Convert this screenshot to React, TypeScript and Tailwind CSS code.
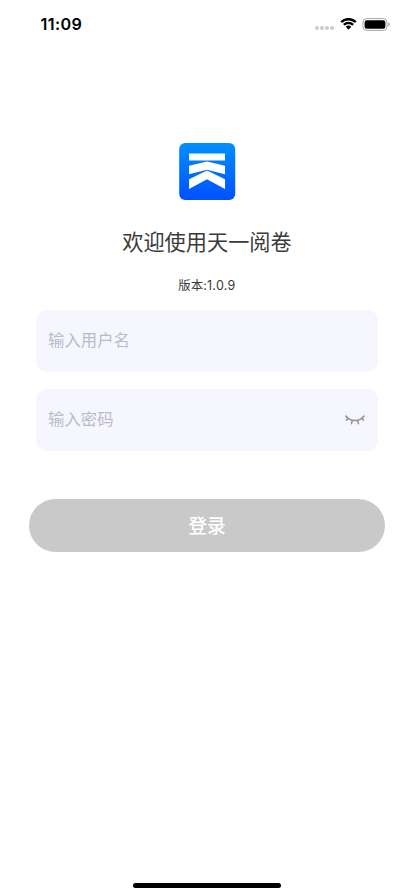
import React from "react";

const cjk = "font-['Noto_Sans_CJK_SC',sans-serif]";

function StatusBar() {
  return (
    <header className="flex h-12 items-center justify-between pl-[40.5px] pr-[24px]">
      <span className="font-['Inter',sans-serif] text-[16.2px] leading-5 font-semibold tracking-[0.35px] text-black">11:09</span>
      <div className="flex items-center">
        <div className="mt-[8px] mr-[6px] flex gap-[1.1px]">
          {[0, 1, 2, 3].map((i) => (
            <span key={i} className="size-[4px] rounded-full bg-[#cccccc]" />
          ))}
        </div>
        <svg width="17" height="12" viewBox="0 0 17 12" className="mr-[5px]">
          <path d="M8.5 2.4c2.4 0 4.6.9 6.2 2.4.1.1.3.1.4 0l1.3-1.2a.3.3 0 0 0 0-.5 11.4 11.4 0 0 0-15.8 0 .3.3 0 0 0 0 .5l1.3 1.2c.1.1.3.1.4 0a9 9 0 0 1 6.2-2.4Z" />
          <path d="M8.5 6.2c1.3 0 2.6.5 3.5 1.4.1.1.3.1.4 0l1.3-1.3a.3.3 0 0 0 0-.5 7.5 7.5 0 0 0-10.4 0 .3.3 0 0 0 0 .5l1.3 1.3c.1.1.3.1.4 0 1-.9 2.2-1.4 3.5-1.4Z" />
          <path d="m11 9.1-2.3 2.3a.3.3 0 0 1-.4 0L6 9.1a.3.3 0 0 1 0-.5 3.8 3.8 0 0 1 5 0c.2.1.2.4 0 .5Z" />
        </svg>
        <svg width="28" height="13" viewBox="0 0 28 13">
          <rect x="1" y="0.6" width="24" height="11.8" rx="3.6" fill="none" stroke="#a6a6a6" />
          <rect x="2.6" y="2.2" width="20.8" height="8.6" rx="2.2" />
          <path d="M26.4 4.5v4c.8-.3 1.3-1.1 1.3-2s-.5-1.7-1.3-2Z" fill="#999" />
        </svg>
      </div>
    </header>
  );
}

function Logo() {
  return (
    <svg width="57" height="57" viewBox="0 0 57 57" className="block">
      <defs>
        <linearGradient id="logo-blue" x1="0" y1="0" x2="0" y2="1">
          <stop offset="0" stopColor="#0090ff" />
          <stop offset="1" stopColor="#0050ff" />
        </linearGradient>
      </defs>
      <rect x="0.2" width="56" height="57" rx="6" fill="url(#logo-blue)" />
      <g fill="#fff">
        <path d="M10 10.4h36v7H10Z" />
        <path d="M10 22.8 28 18.6l18 4.2v8.5L28 26.7 10 31.3Z" />
        <path d="M10 36.2 28 27.6l18 8.6v9.9L28 36.3 10 46.1Z" />
      </g>
    </svg>
  );
}

function ClosedEye() {
  return (
    <svg width="20" height="10" viewBox="0 0 20 10" fill="none" stroke="#929296" strokeWidth="1.5" strokeLinecap="round">
      <path d="M0.9 1C5.3 7 14.7 7 19.1 1M3 3.2 1.5 5.2M7.2 5.5 6.5 8.7M12.7 5.5l.7 3.2M17 3.2l1.5 2" />
    </svg>
  );
}

function Field({ label, type, children }: { label: string; type: string; children?: React.ReactNode }) {
  return (
    <div className="flex h-[62px] w-[342px] items-center rounded-[11px] bg-[#f6f6ff] pr-[13px] pl-[12px]">
      <input
        type={type}
        placeholder={label}
        className={`${cjk} mb-[4px] h-8 min-w-0 flex-1 bg-transparent text-[16.4px] text-[#333] outline-none placeholder:text-[#bbbacb]`}
      />
      {children}
    </div>
  );
}

export default function App() {
  return (
    <div className="flex h-[896px] w-[414px] flex-col bg-white">
      <StatusBar />
      <main className="flex flex-1 flex-col items-center pt-[95px]">
        <Logo />
        <h1 className={`${cjk} mt-[25px] text-[21.2px] leading-8 font-normal text-[#3a3a3a]`}>欢迎使用天一阅卷</h1>
        <p className="mt-[19px] font-['Inter','Noto_Sans_CJK_SC',sans-serif] text-[12.5px] leading-5 text-[#3a3a3a]">
          版本:<span className="tracking-[0.3px]">1.0.9</span>
        </p>
        <form className="mt-[14.4px] flex flex-col items-center">
          <Field label="输入用户名" type="text" />
          <div className="h-[16.5px]" />
          <Field label="输入密码" type="password">
            <ClosedEye />
          </Field>
          <button type="button" className={`${cjk} mt-[48px] h-[53px] w-[356px] rounded-full bg-[#c9c9c9] text-[18.8px] font-medium text-white`}>
            登录
          </button>
        </form>
      </main>
      <footer className="flex justify-center pb-[8px]">
        <div className="h-[5px] w-[148px] rounded-full bg-black" />
      </footer>
    </div>
  );
}
